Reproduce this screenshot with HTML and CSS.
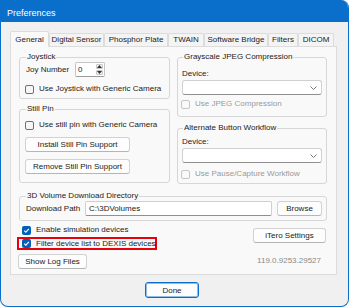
FILE: index.html
```html
<!DOCTYPE html>
<html>
<head>
<meta charset="utf-8">
<title>Preferences</title>
<link rel="stylesheet" href="styles.css">
</head>
<body>
<div class="window">
  <div class="titlebar">Preferences</div>
  <div class="dialog">
    <div class="tabs">
      <div class="tab tab-general active">General</div>
      <div class="tab tab-sensor">Digital Sensor</div>
      <div class="tab tab-plate">Phosphor Plate</div>
      <div class="tab tab-twain">TWAIN</div>
      <div class="tab tab-bridge">Software Bridge</div>
      <div class="tab tab-filters">Filters</div>
      <div class="tab tab-dicom">DICOM</div>
    </div>
    <div class="panel">
      <div class="cols">
        <div class="col col-left">
          <fieldset class="group g-joy">
            <legend>Joystick</legend>
            <div class="joy-row">
              <span class="joy-label">Joy Number</span>
              <div class="spin">
                <span class="spin-val">0</span>
                <span class="spin-btns">
                  <span class="spin-btn"><svg width="5" height="3" viewBox="0 0 5 3"><path d="M0 3 L2.5 0 L5 3 Z" fill="#333"/></svg></span>
                  <span class="spin-btn"><svg width="5" height="3" viewBox="0 0 5 3"><path d="M0 0 L2.5 3 L5 0 Z" fill="#333"/></svg></span>
                </span>
              </div>
            </div>
            <label class="check joy-check"><span class="cb"></span>Use Joystick with Generic Camera</label>
          </fieldset>
          <fieldset class="group g-pin">
            <legend>Still Pin</legend>
            <label class="check pin-check"><span class="cb"></span>Use still pin with Generic Camera</label>
            <button class="btn pin-btn">Install Still Pin Support</button>
            <button class="btn pin-btn">Remove Still Pin Support</button>
          </fieldset>
        </div>
        <div class="col col-right">
          <fieldset class="group g-right g-gray">
            <legend>Grayscale JPEG Compression</legend>
            <div class="dev-label">Device:</div>
            <div class="combo"><svg width="7" height="4" viewBox="0 0 7 4"><path d="M0.5 0.5 L3.5 3.5 L6.5 0.5" fill="none" stroke="#777" stroke-width="1"/></svg></div>
            <label class="check disabled"><span class="cb"></span>Use JPEG Compression</label>
          </fieldset>
          <fieldset class="group g-right g-alt">
            <legend>Alternate Button Workflow</legend>
            <div class="dev-label">Device:</div>
            <div class="combo"><svg width="7" height="4" viewBox="0 0 7 4"><path d="M0.5 0.5 L3.5 3.5 L6.5 0.5" fill="none" stroke="#777" stroke-width="1"/></svg></div>
            <label class="check disabled"><span class="cb"></span>Use Pause/Capture Workflow</label>
          </fieldset>
        </div>
      </div>
      <fieldset class="group g-dir">
        <legend>3D Volume Download Directory</legend>
        <div class="dir-row">
          <span class="dir-label">Download Path</span>
          <div class="textbox">C:\3DVolumes</div>
          <button class="btn browse-btn">Browse</button>
        </div>
      </fieldset>
      <div class="lower">
        <div class="lower-left">
          <label class="check sim-check"><span class="cb checked"><svg width="9" height="9" viewBox="0 0 9 9"><path d="M2.2 4.7 L3.8 6.2 L6.9 2.9" fill="none" stroke="#fff" stroke-width="1.1"/></svg></span>Enable simulation devices</label>
          <div class="highlight">
            <label class="check"><span class="cb checked"><svg width="9" height="9" viewBox="0 0 9 9"><path d="M2.2 4.7 L3.8 6.2 L6.9 2.9" fill="none" stroke="#fff" stroke-width="1.1"/></svg></span>Filter device list to DEXIS devices</label>
          </div>
          <button class="btn log-btn">Show Log Files</button>
        </div>
        <div class="lower-right">
          <button class="btn itero-btn">iTero Settings</button>
          <div class="version">119.0.9253.29527</div>
        </div>
      </div>
    </div>
    <div class="footer">
      <button class="btn done-btn">Done</button>
    </div>
  </div>
</div>
</body>
</html>
```

FILE: styles.css
```css
* { box-sizing: border-box; }
body {
  margin: 0;
  background: #ffffff;
  font-family: "Liberation Sans", Arial, sans-serif;
  font-size: 8px;
  line-height: 10px;
  color: #1b1b1b;
}
.window {
  width: 349px;
  height: 307px;
  border: 1px solid #0a6fcb;
  border-top: 0;
  border-radius: 0 8px 8px 8px;
  overflow: hidden;
  background: #f0f0f0;
  display: flex;
  flex-direction: column;
}
.titlebar {
  flex: none;
  height: 22px;
  background: #0a6fcb;
  color: #ffffff;
  font-size: 9px;
  line-height: 18px;
  padding: 4px 0 0 6px;
}
.dialog {
  flex: 1;
  padding: 9px 0 0 9px;
}
.tabs {
  display: flex;
  align-items: flex-end;
  height: 15px;
}
.tab {
  height: 13px;
  border: 1px solid #dcdcdc;
  border-bottom: 0;
  border-radius: 2px 2px 0 0;
  background: #f4f4f4;
  display: flex;
  align-items: center;
  justify-content: center;
  white-space: nowrap;
}
.tab.active {
  height: 16px;
  margin-bottom: -1px;
  background: #f9f9f9;
  position: relative;
  z-index: 1;
}
.tab-general { width: 39px; }
.tab-sensor { width: 55px; }
.tab-plate { width: 64px; }
.tab-twain { width: 36px; }
.tab-bridge { width: 64px; }
.tab-filters { width: 30px; }
.tab-dicom { width: 36px; }

.panel {
  width: 327px;
  height: 229px;
  border: 1px solid #dcdcdc;
  background: #f9f9f9;
  padding: 5px 9px 0 8px;
  display: flex;
  flex-direction: column;
}
.cols {
  display: flex;
  gap: 7px;
}
.col { display: flex; flex-direction: column; }
.col-left { width: 151px; }
.col-right { width: 150px; }

.group {
  margin: 0;
  min-width: 0;
  border: 1px solid #d6d6d6;
  border-radius: 3px;
  padding: 0 6px;
}
.group legend {
  padding: 0 1px;
  line-height: 10px;
}
.g-right { padding: 0 4px; }
.g-right legend { margin-left: 1px; }

.g-joy { padding-bottom: 4px; }
.joy-row {
  display: flex;
  align-items: center;
  height: 15px;
}
.joy-label { width: 49px; }
.spin {
  display: flex;
  width: 30px;
  height: 15px;
  border: 1px solid #c4c4c4;
  border-bottom-color: #9a9a9a;
  border-radius: 2px;
  background: #ffffff;
}
.spin-val { flex: 1; padding-left: 2px; line-height: 13px; }
.spin-btns {
  width: 8px;
  display: flex;
  flex-direction: column;
  gap: 1px;
  padding: 1px 1px 1px 0;
}
.spin-btn {
  flex: 1;
  border: 1px solid #c8c8c8;
  border-radius: 1px;
  background: #f0f0f0;
  display: flex;
  align-items: center;
  justify-content: center;
}
.joy-check { margin-top: 7px; }

.g-pin { margin-top: 5px; padding-bottom: 8px; }
.pin-check { margin-top: 6px; }
.pin-btn { width: 105px; margin-top: 7px; margin-left: -1px; }

.g-gray { padding-bottom: 7px; }
.g-gray .dev-label { margin-top: 7px; }
.g-gray .check { margin-top: 4px; }
.g-alt { margin-top: 6px; padding-bottom: 4px; }
.g-alt .dev-label { margin-top: 4px; }
.g-alt .check { margin-top: 6px; }
.combo {
  margin-top: 1px;
  height: 15px;
  border: 1px solid #d0d0d0;
  border-bottom-color: #8f8f8f;
  border-radius: 3px;
  background: #ffffff;
  display: flex;
  align-items: center;
  justify-content: flex-end;
  padding-right: 4px;
}

.check {
  display: flex;
  align-items: center;
  gap: 5px;
  height: 10px;
  white-space: nowrap;
}
.group .check { margin-left: -1px; }
.cb {
  flex: none;
  width: 9px;
  height: 9px;
  border: 1px solid #6f6f6f;
  border-radius: 2px;
  background: #f6f6f6;
}
.cb.checked {
  border: 0;
  background: #005fb8;
  display: flex;
}
.check.disabled { color: #9a9a9a; }
.check.disabled .cb { border-color: #c6c6c6; background: #f9f9f9; }

.btn {
  font: inherit;
  color: #1b1b1b;
  height: 15px;
  padding: 0;
  border: 1px solid #d2d2d2;
  border-bottom-color: #b5b5b5;
  border-radius: 3px;
  background: #fdfdfd;
  line-height: 13px;
  text-align: center;
}

.g-dir { margin-top: 7px; padding: 0 4px 4px 6px; }
.dir-row { display: flex; align-items: center; height: 15px; }
.dir-label { width: 59px; }
.textbox {
  width: 187px;
  height: 15px;
  border: 1px solid #d0d0d0;
  border-bottom-color: #8f8f8f;
  border-radius: 2px;
  background: #ffffff;
  padding-left: 3px;
  line-height: 13px;
}
.browse-btn { width: 45px; margin-left: 5px; }

.lower {
  display: flex;
  justify-content: space-between;
}
.lower-left {
  display: flex;
  flex-direction: column;
  align-items: flex-start;
}
.sim-check { margin-top: 4px; margin-left: 3px; }
.highlight {
  margin-top: 2px;
  margin-left: -2px;
  width: 140px;
  height: 13px;
  border: 2px solid #e8000b;
  padding-left: 3px;
  display: flex;
  align-items: center;
}
.highlight .check { height: 9px; }
.log-btn { width: 69px; margin-top: 4px; margin-left: -1px; }
.lower-right {
  display: flex;
  flex-direction: column;
  align-items: flex-end;
}
.itero-btn { width: 73px; margin-top: 7px; margin-right: 1px; }
.version { margin-top: 13px; margin-right: 6px; color: #8a8a8a; }

.footer {
  width: 327px;
  display: flex;
  justify-content: center;
  padding-right: 3px;
  margin-top: 7px;
}
.done-btn {
  width: 54px;
  height: 16px;
  border: 1px solid #0a6fcb;
  box-shadow: inset 0 0 0 1px rgba(10, 111, 203, 0.45);
  background: #fdfdfd;
}
```
